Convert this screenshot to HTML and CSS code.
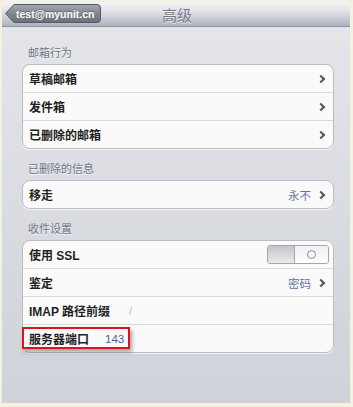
FILE: index.html
```html
<!DOCTYPE html>
<html>
<head>
<meta charset="utf-8">
<link rel="stylesheet" href="styles.css">
</head>
<body>
<div class="frame">
  <div class="navbar">
    <div class="back">
      <svg class="back-bg" viewBox="0 0 96 19" preserveAspectRatio="none">
        <defs>
          <linearGradient id="bg" x1="0" y1="0" x2="0" y2="1">
            <stop offset="0" stop-color="#a6aab3"/>
            <stop offset="0.5" stop-color="#82878f"/>
            <stop offset="1" stop-color="#6a707b"/>
          </linearGradient>
        </defs>
        <path d="M0.5 9.5 L9 0.5 H92 Q95.5 0.5 95.5 4 V15 Q95.5 18.5 92 18.5 H9 Z" fill="url(#bg)" stroke="#535965" stroke-width="1"/>
      </svg>
      <span class="back-text">test@myunit.cn</span>
    </div>
    <div class="title">高级</div>
  </div>
  <div class="content">
    <div class="section-header first">邮箱行为</div>
    <div class="group">
      <div class="row"><span class="label">草稿邮箱</span><span class="chev"></span></div>
      <div class="row"><span class="label">发件箱</span><span class="chev"></span></div>
      <div class="row"><span class="label">已删除的邮箱</span><span class="chev"></span></div>
    </div>
    <div class="section-header">已删除的信息</div>
    <div class="group">
      <div class="row"><span class="label">移走</span><span class="value">永不</span><span class="chev"></span></div>
    </div>
    <div class="section-header">收件设置</div>
    <div class="group">
      <div class="row"><span class="label">使用 SSL</span>
        <span class="toggle"><span class="tog-left"></span><span class="tog-right"><span class="circle"></span></span></span>
      </div>
      <div class="row"><span class="label">鉴定</span><span class="value">密码</span><span class="chev"></span></div>
      <div class="row"><span class="label">IMAP 路径前缀</span><span class="slash">/</span></div>
      <div class="row highlight-row"><span class="label">服务器端口</span><span class="port">143</span><span class="redbox"></span></div>
    </div>
  </div>
</div>
</body>
</html>
```

FILE: styles.css
```css
html, body {
  margin: 0;
  padding: 0;
}
body {
  background: #f3f2e2;
  font-family: "Liberation Sans", "Noto Sans CJK SC", sans-serif;
  width: 353px;
  height: 407px;
  overflow: hidden;
}
.frame {
  margin: 2px 3px 0 2px;
  width: 348px;
  height: 401px;
  display: flex;
  flex-direction: column;
}
.navbar {
  height: 24px;
  border-bottom: 1px solid #8e939f;
  background: linear-gradient(#f3f4f6 0%, #dfe1e6 40%, #bfc3cd 80%, #aeb2be 100%);
  position: relative;
  display: flex;
  align-items: center;
  justify-content: center;
}
.back {
  position: absolute;
  left: 3px;
  top: 2px;
  width: 96px;
  height: 19px;
  display: flex;
  align-items: center;
}
.back-bg {
  position: absolute;
  left: 0;
  top: 0;
  width: 96px;
  height: 19px;
}
.back-text {
  position: relative;
  margin-left: 11px;
  color: #ffffff;
  font-weight: bold;
  font-size: 10.5px;
  text-shadow: 0 -1px 0 rgba(0,0,0,0.3);
}
.title {
  color: #737886;
  font-size: 15px;
  font-family: "Noto Sans CJK SC", sans-serif;
  text-shadow: 0 1px 0 rgba(255,255,255,0.7);
  margin-left: 2px;
}
.content {
  flex: 1;
  background: linear-gradient(#e3e5e9, #cfd2d8);
  padding: 0 16px 0 20px;
}
.section-header {
  height: 31px;
  box-sizing: border-box;
  padding: 12px 0 0 6px;
  line-height: 14px;
  font-size: 11px;
  color: #6d7282;
  font-family: "Noto Sans CJK SC", sans-serif;
  text-shadow: 0 1px 0 rgba(255,255,255,0.8);
}
.section-header.first {
  height: 37px;
  padding-top: 18px;
}
.group {
  background: #fafafa;
  border: 1px solid #b9bcc3;
  border-radius: 8px;
  box-shadow: 0 1px 0 rgba(255,255,255,0.7);
}
.row {
  height: 27px;
  display: flex;
  align-items: center;
  padding: 0 7px 0 6px;
  position: relative;
}
.row + .row {
  border-top: 1px solid #d9d9dc;
}
.label {
  flex: 1;
  font-size: 12px;
  font-weight: bold;
  color: #1f1f22;
  font-family: "Liberation Sans", "Noto Sans CJK SC", sans-serif;
}
.highlight-row .label {
  flex: none;
}
.value {
  font-size: 11.5px;
  color: #5f73a0;
  font-family: "Noto Sans CJK SC", sans-serif;
  margin-right: 7px;
}
.chev {
  width: 4px;
  height: 4px;
  border-right: 2px solid #55565b;
  border-top: 2px solid #55565b;
  transform: rotate(45deg);
  margin-right: 2px;
}
.slash {
  flex: none;
  position: absolute;
  left: 106px;
  color: #b8b8bc;
  font-size: 11px;
}
.port {
  margin-left: 16px;
  font-size: 11.5px;
  color: #4c6392;
}
.redbox {
  position: absolute;
  left: -1px;
  top: 2px;
  width: 104px;
  height: 18px;
  border: 2px solid #e0121b;
  box-shadow: 2px 3px 4px rgba(0,0,0,0.35);
}
.toggle {
  display: flex;
  width: 60px;
  height: 17px;
  border: 1px solid #a2a5ab;
  border-radius: 3px;
  overflow: hidden;
  margin-right: -3px;
}
.tog-left {
  width: 26px;
  background: linear-gradient(#c3c5c9, #e9eaec);
  border-right: 1px solid #a2a5ab;
}
.tog-right {
  flex: 1;
  background: linear-gradient(#f0f0f1, #fdfdfd);
  display: flex;
  align-items: center;
  justify-content: center;
}
.circle {
  width: 7px;
  height: 7px;
  border: 1.5px solid #8a8c91;
  border-radius: 50%;
}
```
